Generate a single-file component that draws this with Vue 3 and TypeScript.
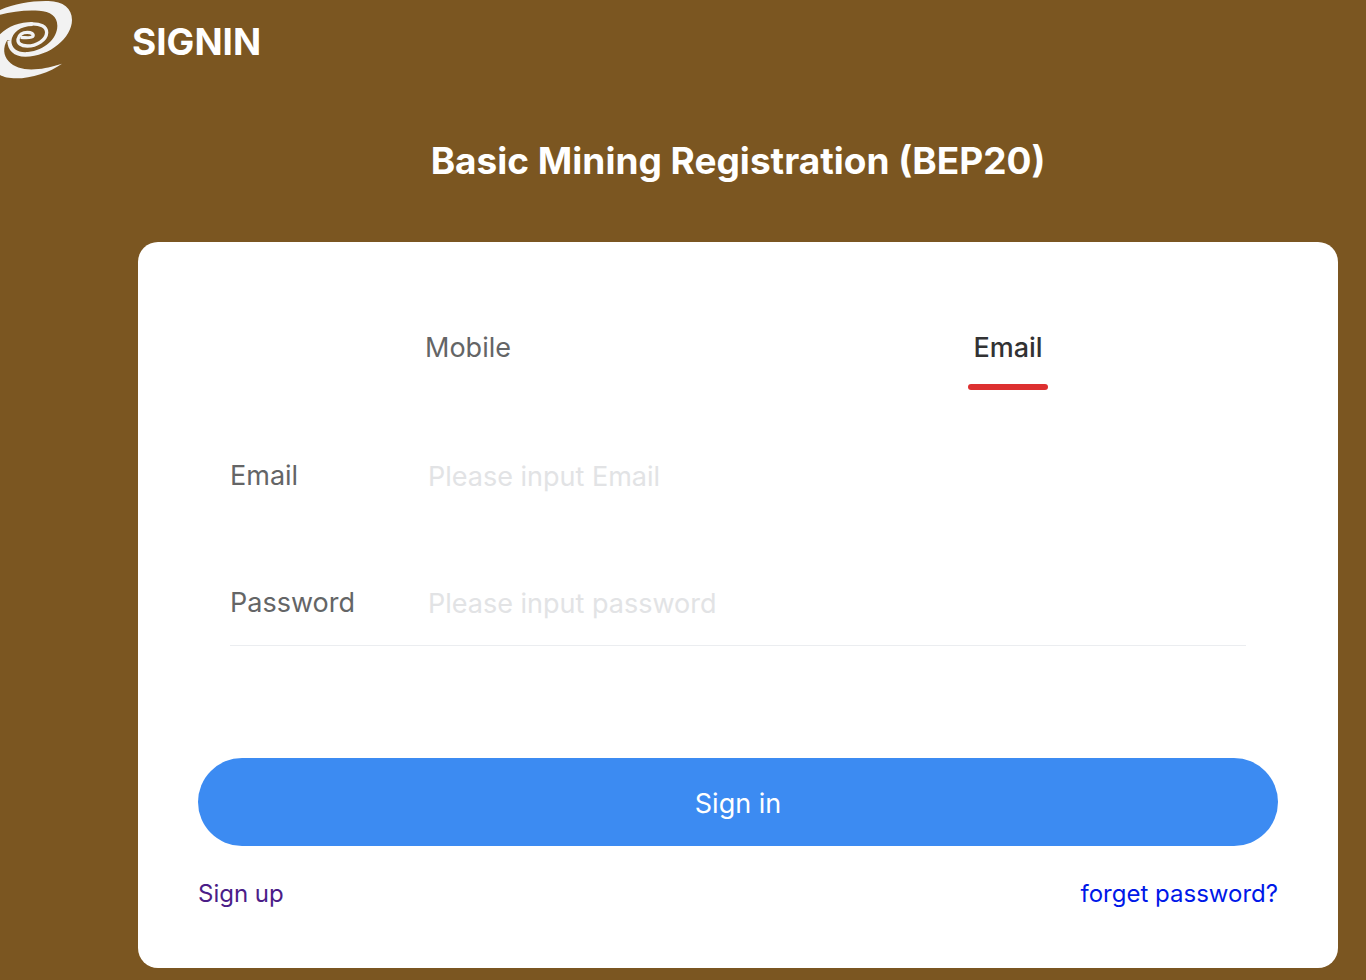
<script setup lang="ts">
import { ref } from 'vue'

const tabs = ['Mobile', 'Email']
const active = ref('Email')
const account = ref('')
const password = ref('')
</script>

<template>
  <div class="page">
    <header class="top">
      <svg class="logo" viewBox="0 0 240 240" aria-hidden="true">
        <g fill="#f2f2f2">
          <path
            d="M0 30 C45 10 95 2 145 3 C190 4 216 25 216 60 C216 112 150 170 76 170 C42 170 22 150 22 122 L34 122 C34 146 54 159 84 156 C134 150 172 116 172 77 C172 48 151 34 117 32 C78 29 35 35 0 44 Z"
          />
          <path
            d="M0 103 C24 78 60 66 98 66 L98 78 C60 78 36 98 34 124 L22 120 C8 142 10 166 26 184 C45 206 80 211 115 207 C145 204 165 197 186 191 C150 217 95 235 48 235 C28 235 10 231 0 225 Z"
          />
        </g>
        <path
          d="M90 72 C122 70 140 80 140 98 C139 120 110 138 82 138 C62 138 53 130 54 118 C56 105 68 97 82 97 C94 97 101 102 99 108 C97 114 82 114 62 112"
          fill="none"
          stroke="#f2f2f2"
          stroke-width="10"
        />
      </svg>
      <h1>SIGNIN</h1>
    </header>

    <main>
      <h2>Basic Mining Registration (BEP20)</h2>
      <form class="card" @submit.prevent>
        <div class="tabs" role="tablist">
          <button
            v-for="tab in tabs"
            :key="tab"
            type="button"
            role="tab"
            class="tab"
            :class="{ active: tab === active }"
            :aria-selected="tab === active"
            @click="active = tab"
          >
            {{ tab }}
          </button>
        </div>

        <div class="fields">
          <div class="field">
            <label for="account">{{ active }}</label>
            <input id="account" v-model="account" type="text" :placeholder="`Please input ${active}`" />
          </div>
          <div class="field">
            <label for="password">Password</label>
            <input id="password" v-model="password" type="password" placeholder="Please input password" />
          </div>
        </div>

        <button type="submit" class="submit">Sign in</button>

        <nav class="links">
          <a class="signup" href="#signup">Sign up</a>
          <a class="forgot" href="#forgot">forget password?</a>
        </nav>
      </form>
    </main>
  </div>
</template>

<style>
body {
  margin: 0;
  background: #7b5621;
}
</style>

<style scoped>
.page {
  box-sizing: border-box;
  min-height: 100vh;
  padding-bottom: 12px;
  background: #7b5621;
  color: #fff;
  font-family: Inter, 'Liberation Sans', sans-serif;
}

.top {
  display: flex;
  align-items: center;
  gap: 52px;
  height: 84px;
}

.logo {
  width: 80px;
  height: 80px;
  margin-bottom: 4px;
}

h1,
h2 {
  margin: 0;
  font-size: 37px;
  line-height: 48px;
  font-weight: 700;
}

main {
  margin: 0 28px 0 138px;
}

h2 {
  padding: 53px 0 57px;
  text-align: center;
}

.card {
  padding: 60px 60px 58px;
  border-radius: 20px;
  background: #fff;
}

.tabs {
  display: flex;
}

.tab {
  flex: 1;
  display: flex;
  flex-direction: column;
  align-items: center;
  height: 88px;
  padding: 0;
  border: 0;
  background: none;
  color: #646566;
  font-family: inherit;
  font-size: 27px;
  line-height: 92px;
}

.tab.active {
  color: #323233;
  font-weight: 500;
}

.tab.active::after {
  content: '';
  flex: none;
  width: 80px;
  height: 6px;
  margin-top: -10px;
  border-radius: 3px;
  background: #dd3030;
}

.fields {
  padding: 0 32px;
}

.field {
  display: flex;
  align-items: flex-end;
  height: 128px;
  box-sizing: border-box;
  padding-bottom: 18px;
}

.field:last-child {
  border-bottom: 1px solid #ebedf0;
}

.field label {
  width: 198px;
  flex: none;
  color: #646566;
  font-size: 27px;
  line-height: 48px;
}

.field input {
  flex: 1;
  min-width: 0;
  height: 48px;
  padding: 0;
  border: 0;
  outline: 0;
  background: none;
  color: #323233;
  font-family: inherit;
  font-size: 27px;
}

.field input::placeholder {
  color: #e2e3e5;
  opacity: 1;
}

.submit {
  display: block;
  width: 100%;
  height: 88px;
  margin-top: 112px;
  padding: 2px 0 0;
  border: 0;
  border-radius: 44px;
  background: #3c8bf2;
  color: #fff;
  font-family: inherit;
  font-size: 27px;
}

.links {
  display: flex;
  justify-content: space-between;
  margin-top: 32px;
  font-size: 24px;
  line-height: 32px;
}

.links a {
  text-decoration: none;
}

.signup {
  color: #4b1d88;
}

.forgot {
  color: #0018e8;
}
</style>
